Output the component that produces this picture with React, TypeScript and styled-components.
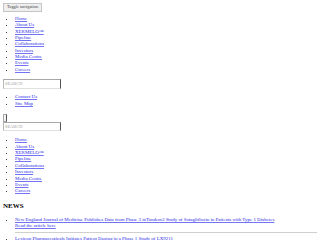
import React from "react";
import styled, { createGlobalStyle } from "styled-components";

const Global = createGlobalStyle`
  html, body { background: #fff; }
  body {
    margin: 3px;
    font-family: "Liberation Serif", "Times New Roman", serif;
    font-size: 4.95px;
    color: #000;
  }
`;

const Page = styled.div`
  display: flex;
  flex-direction: column;
  align-items: flex-start;
`;

const ToggleButton = styled.button`
  font-family: "Liberation Serif", serif;
  font-size: 4.3px;
  white-space: nowrap;
  height: 9px;
  width: 39px;
  padding: 0 2px;
  margin: 0;
  background: #efefef;
  border: 1px solid #c4c4c4;
  color: #444;
  line-height: 1;
`;

const NavList = styled.ul<{ $top: number; $bottom: number }>`
  margin: ${(p) => p.$top}px 0 ${(p) => p.$bottom}px;
  padding-left: 12px;
  list-style: disc;
  line-height: 6.375px;
  align-self: stretch;
`;

const Link = styled.a`
  color: #2a2ae8;
  text-decoration: underline;
  text-decoration-color: rgba(0, 0, 238, 0.55);
`;

const SearchInput = styled.input<{ $h: number }>`
  font-family: "Liberation Serif", serif;
  font-size: 4.4px;
  width: 58px;
  height: ${(p) => p.$h}px;
  box-sizing: border-box;
  margin: 0;
  padding: 0 1px;
  border-top: 1px solid #a8a8a8;
  border-left: 1px solid #b8b8b8;
  border-right: 1px solid #555;
  border-bottom: 1px solid #e0e0e0;
  background: #fff;
  &::placeholder { color: #9a9a9a; }
`;

const Stub = styled.div`
  width: 2px;
  height: 6px;
  border: 1px solid #a8a8a8;
  border-right-color: #555;
  background: #f4f4f4;
`;

const SearchWrap = styled.div`
  display: flex;
  flex-direction: column;
  align-items: flex-start;
`;

const Heading = styled.h2`
  font-size: 7px;
  line-height: 8px;
  font-weight: bold;
  margin: 7.3px 0 6.8px;
`;

const NewsList = styled.ul`
  margin: 0;
  padding-left: 12px;
  list-style: disc;
  line-height: 6.375px;
  align-self: stretch;
`;

const NewsItem = styled.li<{ $divider?: boolean }>`
  padding-bottom: ${(p) => (p.$divider ? "2px" : "0")};
  margin-bottom: ${(p) => (p.$divider ? "3.3px" : "0")};
  border-bottom: ${(p) => (p.$divider ? "1px solid #cfcfcf" : "none")};
`;

const NewsLink = styled(Link)`
  display: block;
`;

const navItems = [
  "Home",
  "About Us",
  "XERMELO™",
  "Pipeline",
  "Collaborations",
  "Investors",
  "Media Centre",
  "Events",
  "Careers",
];

function Nav({ top, bottom }: { top: number; bottom: number }) {
  return (
    <NavList $top={top} $bottom={bottom}>
      {navItems.map((n) => (
        <li key={n}>
          <Link href="#">{n}</Link>
        </li>
      ))}
    </NavList>
  );
}

export default function App() {
  return (
    <>
      <Global />
      <Page>
        <ToggleButton>Toggle navigation</ToggleButton>
        <Nav top={3.8} bottom={5.8} />
        <SearchInput $h={10} placeholder="SEARCH" />
        <NavList $top={5.3} $bottom={7}>
          <li><Link href="#">Contact Us</Link></li>
          <li><Link href="#">Site Map</Link></li>
        </NavList>
        <SearchWrap>
          <Stub />
          <SearchInput $h={9} placeholder="SEARCH" />
        </SearchWrap>
        <Nav top={6.3} bottom={0} />
        <Heading>NEWS</Heading>
        <NewsList>
          <NewsItem $divider>
            <Link href="#">
              New England Journal of Medicine Publishes Data from Phase 3 inTandem3 Study of Sotagliflozin in Patients with Type 1 Diabetes
            </Link>
            <NewsLink href="#">Read the article here</NewsLink>
          </NewsItem>
          <NewsItem>
            <Link href="#">Lexicon Pharmaceuticals Initiates Patient Dosing in a Phase 1 Study of LX9211</Link>
          </NewsItem>
        </NewsList>
      </Page>
    </>
  );
}
